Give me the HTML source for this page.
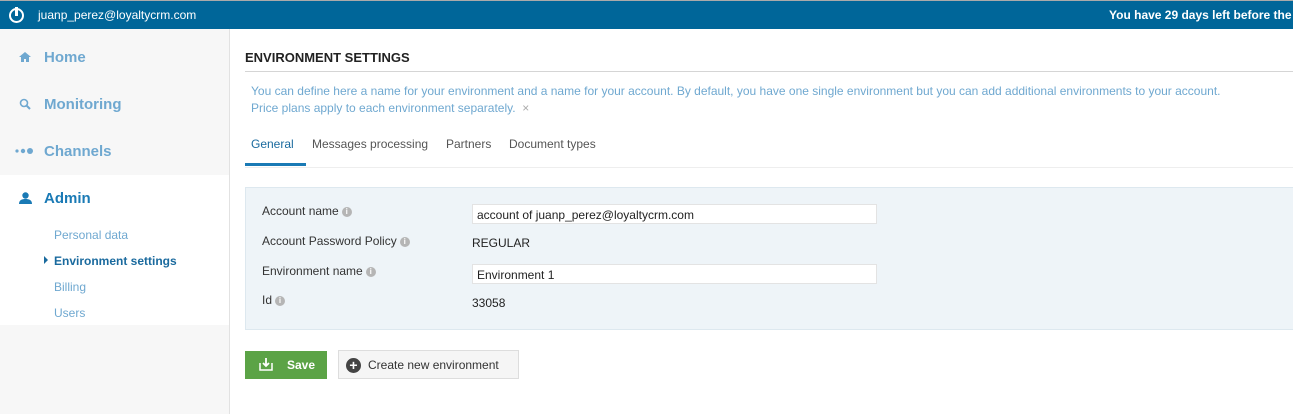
<!DOCTYPE html><html><head><style>
*{margin:0;padding:0;box-sizing:border-box}
body{width:1293px;height:414px;overflow:hidden;font-family:"Liberation Sans",Arial,sans-serif;background:#fff;position:relative}
.top{position:absolute;left:0;top:0;width:1293px;height:29px;background:#006699;border-top:1px solid #aaa;color:#fff;font-size:12px}
.side{position:absolute;left:0;top:29px;width:230px;height:385px;background:#f7f7f7;border-right:1px solid #e2e2e2}
.nav{position:absolute;left:44px;font-size:15px;font-weight:bold;color:#6fa8d0}
.sub{position:absolute;left:54px;font-size:12px;color:#6fa8d0}
.abs{position:absolute}
.lbl{position:absolute;left:262px;font-size:12px;color:#333}
.i{display:inline-block;width:10px;height:10px;border-radius:50%;background:#b5b5b5;color:#fff;font-size:8px;line-height:10px;text-align:center;font-weight:bold;vertical-align:1px;margin-left:3px}
.inp{position:absolute;left:472px;width:405px;height:20px;border:1px solid #e3e3e3;background:#fff;font-size:12px;padding:3px 4px;color:#222}
</style></head><body>
<div class="top">
<div class="abs" style="left:9px;top:7px;width:15px;height:15px;border:2px solid #fff;border-radius:50%"></div>
<div class="abs" style="left:15px;top:6px;width:3px;height:9px;background:#fff"></div>
<div class="abs" style="left:38px;top:7px">juanp_perez@loyaltycrm.com</div>
<div class="abs" style="left:1109px;top:7px;font-weight:bold;white-space:nowrap">You have 29 days left before the end</div>
</div>
<div class="side">
<div class="abs" style="left:0;top:146px;width:229px;height:150px;background:#fff"></div>
</div>
<svg class="abs" style="left:19px;top:51px" width="12" height="12"><path d="M6 1L0 6h2v5h3V8h2v3h3V6h2z" fill="#6fa8d0"/></svg>
<div class="nav" style="top:49px">Home</div>
<svg class="abs" style="left:19px;top:98px" width="12" height="12"><circle cx="5" cy="5" r="3.5" stroke="#6fa8d0" stroke-width="1.6" fill="none"/><path d="M7.5 7.5L11 11" stroke="#6fa8d0" stroke-width="2"/></svg>
<div class="nav" style="top:96px">Monitoring</div>
<svg class="abs" style="left:15px;top:147px" width="24" height="8"><circle cx="2" cy="4" r="1.6" fill="#6fa8d0"/><circle cx="8" cy="4" r="2.2" fill="#6fa8d0"/><circle cx="15" cy="4" r="3" fill="#6fa8d0"/></svg>
<div class="nav" style="top:143px">Channels</div>
<svg class="abs" style="left:19px;top:192px" width="13" height="12"><circle cx="6.5" cy="3.5" r="3.2" fill="#1a7ab5"/><path d="M0 12c0-4 3-5 6.5-5s6.5 1 6.5 5z" fill="#1a7ab5"/></svg>
<div class="nav" style="top:190px;color:#1a7ab5">Admin</div>
<div class="sub" style="top:228px">Personal data</div>
<div class="abs" style="left:44px;top:256px;width:0;height:0;border-left:4px solid #1a6a9e;border-top:4px solid transparent;border-bottom:4px solid transparent"></div>
<div class="sub" style="top:254px;color:#1a6a9e;font-weight:bold">Environment settings</div>
<div class="sub" style="top:280px">Billing</div>
<div class="sub" style="top:306px">Users</div>

<div class="abs" style="left:245px;top:50px;font-size:13px;font-weight:bold;color:#222">ENVIRONMENT SETTINGS</div>
<div class="abs" style="left:245px;top:71px;width:1048px;height:1px;background:#d5d5d5"></div>
<div class="abs" style="left:251px;top:83px;font-size:12px;color:#6fa8d0;line-height:17px">You can define here a name for your environment and a name for your account. By default, you have one single environment but you can add additional environments to your account.<br>Price plans apply to each environment separately. &nbsp;<span style="color:#aaa">×</span></div>
<div class="abs" style="left:251px;top:137px;font-size:12px;color:#1a6a9e">General</div>
<div class="abs" style="left:312px;top:137px;font-size:12px;color:#555">Messages processing</div>
<div class="abs" style="left:446px;top:137px;font-size:12px;color:#555">Partners</div>
<div class="abs" style="left:509px;top:137px;font-size:12px;color:#555">Document types</div>
<div class="abs" style="left:245px;top:167px;width:1048px;height:1px;background:#eee"></div>
<div class="abs" style="left:245px;top:163px;width:61px;height:3px;background:#1a7ab5"></div>

<div class="abs" style="left:245px;top:187px;width:1050px;height:143px;background:#eef4f8;border:1px solid #dde8ef"></div>
<div class="lbl" style="top:204px">Account name<span class="i">i</span></div>
<div class="lbl" style="top:234px">Account Password Policy<span class="i">i</span></div>
<div class="lbl" style="top:264px">Environment name<span class="i">i</span></div>
<div class="lbl" style="top:293px">Id<span class="i">i</span></div>
<div class="inp" style="top:204px">account of juanp_perez@loyaltycrm.com</div>
<div class="abs" style="left:472px;top:236px;font-size:12px;color:#222">REGULAR</div>
<div class="inp" style="top:264px">Environment 1</div>
<div class="abs" style="left:472px;top:296px;font-size:12px;color:#222">33058</div>

<div class="abs" style="left:245px;top:351px;width:82px;height:28px;background:#5ba346;color:#fff;font-size:12px;font-weight:bold;padding:7px 0 0 42px">Save</div>
<svg class="abs" style="left:259px;top:357px" width="14" height="14"><path d="M1 6v7h12V6" stroke="#fff" stroke-width="1.5" fill="none"/><path d="M7 1v8M4 6l3 3 3-3" stroke="#fff" stroke-width="1.8" fill="none"/></svg>
<div class="abs" style="left:338px;top:350px;width:181px;height:29px;background:#f5f5f5;border:1px solid #ddd;font-size:12px;color:#333;padding:7px 0 0 29px">Create new environment</div>
<div class="abs" style="left:346px;top:358px;width:15px;height:15px;border-radius:50%;background:#444;color:#fff;font-size:14px;line-height:15px;text-align:center;font-weight:bold">+</div>
</body></html>
